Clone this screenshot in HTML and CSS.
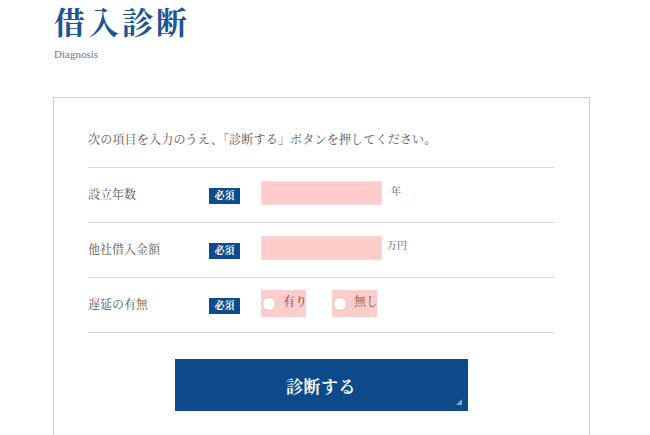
FILE: index.html
```html
<!DOCTYPE html>
<html lang="ja">
<head>
<meta charset="utf-8">
<link rel="stylesheet" href="styles.css">
</head>
<body>
<div class="page">
  <header class="head">
    <h1 class="title">借入診断</h1>
    <p class="sub">Diagnosis</p>
  </header>
  <section class="box">
    <p class="intro">次の項目を入力のうえ、「診断する」ボタンを押してください。</p>
    <div class="rows">
      <div class="row">
        <span class="label">設立年数</span>
        <span class="badge">必須</span>
        <span class="field"><span class="input"></span><span class="unit unit-y">年</span></span>
      </div>
      <div class="row">
        <span class="label">他社借入金額</span>
        <span class="badge">必須</span>
        <span class="field"><span class="input"></span><span class="unit">万円</span></span>
      </div>
      <div class="row">
        <span class="label">遅延の有無</span>
        <span class="badge">必須</span>
        <span class="field radios">
          <span class="radio"><span class="circle"></span><span class="rtext">有り</span></span>
          <span class="radio"><span class="circle"></span><span class="rtext">無し</span></span>
        </span>
      </div>
    </div>
    <div class="actions">
      <button class="submit" type="button">診断する<span class="corner"></span></button>
    </div>
  </section>
</div>
</body>
</html>
```

FILE: styles.css
```css
* { box-sizing: border-box; }
html, body { margin: 0; padding: 0; background: #fff; }
body {
  font-family: "Liberation Serif", "Noto Serif CJK JP", "Noto Sans CJK JP", serif;
  color: #555;
}
.page {
  padding-left: 53px;
  height: 435px;
  overflow: hidden;
}
.head { padding-left: 1px; padding-top: 4px; }
.title {
  margin: 0;
  font-size: 31px;
  line-height: 40px;
  font-weight: 700;
  color: #1d5496;
  letter-spacing: 3px;
}
.sub {
  margin: 3px 0 0;
  font-size: 11px;
  line-height: 14px;
  font-weight: 400;
  color: #777;
}
.box {
  margin-top: 36px;
  width: 537px;
  height: 360px;
  border: 1px solid #cfcfcf;
  padding: 32px 34px 0 34px;
}
.intro {
  margin: 0;
  font-size: 12px;
  line-height: 20px;
  color: #555;
  letter-spacing: 0.2px;
  padding-bottom: 17px;
  border-bottom: 1px solid #d8d8d8;
}
.row {
  display: flex;
  align-items: center;
  height: 55px;
  border-bottom: 1px solid #d8d8d8;
}
.label {
  width: 121px;
  font-size: 12px;
  color: #555;
  margin-bottom: 2px;
}
.badge {
  width: 31px;
  height: 16px;
  background: #0d4b8c;
  color: #fff;
  font-size: 10px;
  font-weight: 700;
  line-height: 16px;
  text-align: center;
  margin-top: 1px;
}
.field {
  display: flex;
  align-items: center;
  margin-left: 21px;
  margin-bottom: 5px;
}
.input {
  width: 121px;
  height: 24px;
  background: #ffcccc;
  border: 1px solid #f3dada;
}
.unit {
  font-size: 10px;
  color: #555;
  margin-left: 5px;
  margin-top: -6px;
}
.unit-y { margin-left: 9px; margin-top: -4px; }
.radios { gap: 26px; margin-bottom: 3px; }
.radio {
  display: flex;
  align-items: center;
  width: 45px;
  height: 27px;
  background: #ffcccc;
}
.circle {
  flex: none;
  width: 14px;
  height: 14px;
  border-radius: 50%;
  background: #fff;
  border: 1px solid #c8c8c8;
  margin-left: 1px;
  margin-right: 7px;
}
.rtext {
  font-size: 12px;
  color: #555;
  white-space: nowrap;
  margin-top: -5px;
}
.actions {
  display: flex;
  justify-content: center;
  padding-top: 26px;
}
.submit {
  position: relative;
  width: 293px;
  height: 52px;
  background: #0c4a8b;
  border: none;
  color: #fff;
  font-family: inherit;
  font-size: 17px;
  font-weight: 700;
  letter-spacing: 0.5px;
  padding: 0;
  margin-left: -1px;
}
.corner {
  position: absolute;
  right: 6px;
  bottom: 6px;
  width: 0;
  height: 0;
  border-left: 6px solid transparent;
  border-bottom: 6px solid #8fa6c3;
}
```
